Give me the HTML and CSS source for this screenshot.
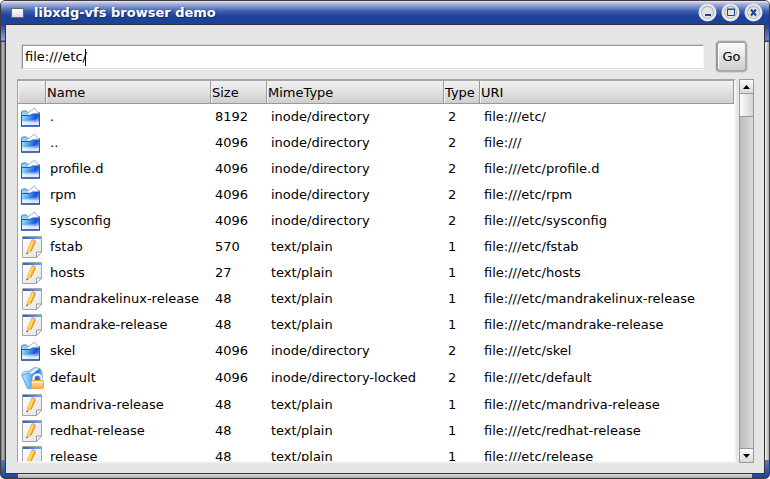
FILE: index.html
```html
<!DOCTYPE html>
<html lang="en">
<head>
<meta charset="utf-8">
<title>libxdg-vfs browser demo</title>
<link rel="stylesheet" href="styles.css">
</head>
<body>
<svg class="defs" aria-hidden="true">
  <defs>
    <linearGradient id="front" x1="0" y1="0" x2="1" y2="0.2">
      <stop offset="0" stop-color="#a4e4ff"/><stop offset=".4" stop-color="#58a8f6"/><stop offset=".8" stop-color="#1450dc"/><stop offset="1" stop-color="#2a70e4"/>
    </linearGradient>
    <linearGradient id="shine" x1="0" y1="0" x2="0" y2="1">
      <stop offset="0" stop-color="#fff" stop-opacity="0"/><stop offset=".35" stop-color="#fff" stop-opacity=".25"/><stop offset=".7" stop-color="#fff" stop-opacity=".85"/><stop offset="1" stop-color="#eef" stop-opacity=".95"/>
    </linearGradient>
    <linearGradient id="leaf" x1="0" y1="0" x2="1" y2="0">
      <stop offset="0" stop-color="#c4ecff"/><stop offset=".35" stop-color="#7cc0f8"/><stop offset=".7" stop-color="#1c60dc"/><stop offset="1" stop-color="#5aa8f0"/>
    </linearGradient>
    <linearGradient id="sheet" x1="0" y1="0" x2="1" y2="1">
      <stop offset="0" stop-color="#fff"/><stop offset="1" stop-color="#e2e2e2"/>
    </linearGradient>
    <linearGradient id="strip"><stop offset="0" stop-color="#2c5fc4"/><stop offset="1" stop-color="#6ea4f0"/></linearGradient>
    <linearGradient id="gold" x1="0" y1="0" x2="0" y2="1"><stop offset="0" stop-color="#ffe4a8"/><stop offset="1" stop-color="#ffae40"/></linearGradient>
    <linearGradient id="cap" x1="0" y1="0" x2="0" y2="1"><stop offset="0" stop-color="#c4c4c4"/><stop offset="1" stop-color="#fff"/></linearGradient>
    <symbol id="folder" viewBox="0 0 20 20">
      <path d="M.5 18V5L1.500 4h4l1 1.500h12V18z" fill="#8cd4f8" stroke="#3a84d0"/>
      <path d="M4 8 13.500 1 19 8z" fill="#f6f7ff" stroke="#a8aee0"/>
      <path d="M.5 19V8.500h9l2-1.500h7v12z" fill="url(#front)" stroke="#1c5cba"/>
      <path d="M1 18.500V14q11 0 17-4v8.500z" fill="url(#shine)"/>
      <path d="M0 19h19" stroke="#0c2f88"/>
    </symbol>
    <symbol id="text" viewBox="0 0 20 22">
      <path d="M.5.5h19v15.500l-5 5.500H.5z" fill="url(#sheet)" stroke="#a6a6a6"/>
      <path d="M1 1h18v2H1z" fill="url(#strip)"/>
      <path d="M14.500 21.500v-5.500h5z" fill="#fff" stroke="#9c9c9c"/>
      <path d="m4.500 18.500.7-5L9.500 4l4 1.500L9.500 15z" fill="#ffb52c"/>
      <path d="m5.800 14 4.400-9.500 1.800.7-4.200 9.500z" fill="#ffdc70"/>
      <path d="m8.500 15.500 4.300-9.700.9.400-4.300 9.300z" fill="#e9870d"/>
      <path d="m9.500 4.500.8-1.500 3.800 1.500-.8 1.500z" fill="#eea28a"/>
      <path d="m4.500 18.500.6-4 3.900 1z" fill="#eac89a"/><path d="m4.500 18.500.3-2 1.400.6z" fill="#333"/>
    </symbol>
    <symbol id="locked" viewBox="0 0 23 24">
      <path d="M.7 8 3.500 5l3.500.5L14.500 1l6 3 1 8-9 9-5 1.500z" fill="#b8e2fd" stroke="#7ab6ee"/>
      <path d="m7 7.500 8.500-6 2.500 2-8 6z" fill="#f0f6ff" stroke="#94bff0"/>
      <path d="M6.500 22.500.8 9.500l6-2.500 4 1.500 8-6 2.500 9L13 22z" fill="url(#leaf)" stroke="#5ca2ee"/>
      <path d="M12.500 15v-2.500a4 4 0 0 1 8 0V15" fill="none" stroke="#a4b0c0" stroke-width="3"/>
      <path d="M12.500 15v-2.500a4 4 0 0 1 8 0V15" fill="none" stroke="#f2f2f2" stroke-width="2"/>
      <rect x="10.500" y="14.500" width="12" height="8" rx="1" fill="url(#gold)" stroke="#eea040"/>
      <path d="M11 16.500h11" stroke="#ffe9bb"/>
    </symbol>
  </defs>
</svg>
<div class="window">
  <header class="titlebar">
    <span class="app-icon"></span>
    <h1 class="title">libxdg-vfs browser demo</h1>
    <button class="caption" type="button" aria-label="Minimize"><svg viewBox="0 0 19 19"><circle class="rim" cx="9.500" cy="9.500" r="8"/><circle class="dish" cx="9.500" cy="9.500" r="6"/><path d="M7 12h6" class="mark"/></svg></button>
    <button class="caption" type="button" aria-label="Maximize"><svg viewBox="0 0 19 19"><circle class="rim" cx="9.500" cy="9.500" r="8"/><circle class="dish" cx="9.500" cy="9.500" r="6"/><path d="M6.500 6.500h7v6h-7zM6 6h8" class="box"/></svg></button>
    <button class="caption" type="button" aria-label="Close"><svg viewBox="0 0 19 19"><circle class="rim" cx="9.500" cy="9.500" r="8"/><circle class="dish" cx="9.500" cy="9.500" r="6"/><path d="m7 6.500 5 6m0-6-5 6" class="mark"/></svg></button>
  </header>
  <div class="frame">
    <main class="client">
      <form class="location">
        <span class="field"><input class="address" type="text" value="file:///etc/" aria-label="Location"><span class="caret"></span></span>
        <button class="go" type="button">Go</button>
      </form>
      <div class="browser">
        <div class="list">
          <table class="files">
            <colgroup><col class="c-icon"><col class="c-name"><col class="c-size"><col class="c-mime"><col class="c-type"><col></colgroup>
            <thead><tr><th></th><th>Name</th><th>Size</th><th>MimeType</th><th>Type</th><th>URI</th></tr></thead>
            <tbody>
              <tr><td><svg class="folder"><use href="#folder"/></svg></td><td>.</td><td>8192</td><td>inode/directory</td><td>2</td><td>file:///etc/</td></tr>
              <tr><td><svg class="folder"><use href="#folder"/></svg></td><td>..</td><td>4096</td><td>inode/directory</td><td>2</td><td>file:///</td></tr>
              <tr><td><svg class="folder"><use href="#folder"/></svg></td><td>profile.d</td><td>4096</td><td>inode/directory</td><td>2</td><td>file:///etc/profile.d</td></tr>
              <tr><td><svg class="folder"><use href="#folder"/></svg></td><td>rpm</td><td>4096</td><td>inode/directory</td><td>2</td><td>file:///etc/rpm</td></tr>
              <tr><td><svg class="folder"><use href="#folder"/></svg></td><td>sysconfig</td><td>4096</td><td>inode/directory</td><td>2</td><td>file:///etc/sysconfig</td></tr>
              <tr><td><svg class="text"><use href="#text"/></svg></td><td>fstab</td><td>570</td><td>text/plain</td><td>1</td><td>file:///etc/fstab</td></tr>
              <tr><td><svg class="text"><use href="#text"/></svg></td><td>hosts</td><td>27</td><td>text/plain</td><td>1</td><td>file:///etc/hosts</td></tr>
              <tr><td><svg class="text"><use href="#text"/></svg></td><td>mandrakelinux-release</td><td>48</td><td>text/plain</td><td>1</td><td>file:///etc/mandrakelinux-release</td></tr>
              <tr><td><svg class="text"><use href="#text"/></svg></td><td>mandrake-release</td><td>48</td><td>text/plain</td><td>1</td><td>file:///etc/mandrake-release</td></tr>
              <tr><td><svg class="folder"><use href="#folder"/></svg></td><td>skel</td><td>4096</td><td>inode/directory</td><td>2</td><td>file:///etc/skel</td></tr>
              <tr class="tall"><td><svg class="locked"><use href="#locked"/></svg></td><td>default</td><td>4096</td><td>inode/directory-locked</td><td>2</td><td>file:///etc/default</td></tr>
              <tr><td><svg class="text"><use href="#text"/></svg></td><td>mandriva-release</td><td>48</td><td>text/plain</td><td>1</td><td>file:///etc/mandriva-release</td></tr>
              <tr><td><svg class="text"><use href="#text"/></svg></td><td>redhat-release</td><td>48</td><td>text/plain</td><td>1</td><td>file:///etc/redhat-release</td></tr>
              <tr><td><svg class="text"><use href="#text"/></svg></td><td>release</td><td>48</td><td>text/plain</td><td>1</td><td>file:///etc/release</td></tr>
            </tbody>
          </table>
        </div>
        <div class="scrollbar">
          <button class="step" type="button" aria-label="Scroll up"><svg viewBox="0 0 7 4"><path d="M0 4h7L3.500 0z"/></svg></button>
          <div class="thumb"></div>
          <button class="step last" type="button" aria-label="Scroll down"><svg viewBox="0 0 7 4"><path d="M0 0h7L3.500 4z"/></svg></button>
        </div>
      </div>
    </main>
  </div>
</div>
</body>
</html>
```
FILE: styles.css
```css
* { box-sizing: border-box; }
body {
  margin: 0;
  background: #fff;
  color: #000;
  font: 13px/16px "DejaVu Sans", sans-serif;
}
button, input { font: inherit; color: inherit; margin: 0; padding: 0; }
svg { display: block; }
.defs { position: absolute; width: 0; height: 0; }

.window {
  display: flex;
  flex-direction: column;
  height: 100vh;
  border: 1px solid #3c3c3c;
  border-radius: 5px;
  overflow: hidden;
  background:
    linear-gradient(#5878bd, #1f429c) 0 100% / 17px 18px no-repeat,
    linear-gradient(#5878bd, #1f429c) 100% 100% / 17px 18px no-repeat,
    linear-gradient(#1f429c, #8da7e0 16px, #1f429c 17px) 0 23px / 5px 18px no-repeat,
    linear-gradient(#1f429c, #6584cb 16px, #1f429c 17px) 100% 23px / 5px 18px no-repeat,
    linear-gradient(#e8e8e8, #a8aaa8) 0 100% / 100% 5px no-repeat,
    linear-gradient(90deg, #777, #bbb 2px, #777 4px) 0 0 / 4px 100% no-repeat,
    linear-gradient(90deg, #f4f4f4, #aaa) 100% 0 / 4px 100% no-repeat;
}
.titlebar {
  display: flex;
  align-items: center;
  flex: none;
  gap: 4px;
  height: 23px;
  padding: 0 6px 0 10px;
  background: linear-gradient(#f0e8f8 0, #b7bfe0 2px, #7890cc 6px, #3f60b2 10px, #1d429c 15px, #1d429c);
}
.app-icon {
  width: 13px;
  height: 10px;
  border: 1px solid #68686c;
  background: linear-gradient(#fff, #ddd);
}
.title {
  flex: 1;
  margin: 0 6px;
  color: #fff;
  font-size: 13px;
  font-weight: bold;
  text-shadow: 1px 1px 1px #122a66;
}
.caption { width: 19px; height: 19px; border: 0; background: none; }
.rim { fill: url(#cap); stroke: #e8e8e8; stroke-width: 2; }
.dish { fill: #e2e4e2; stroke: #b0b2b2; stroke-width: 1; }
.mark { fill: none; stroke: #1f429c; stroke-width: 2; }
.box { fill: none; stroke: #1f429c; }

.frame { flex: 1; min-height: 0; padding: 0 4px 4px; }
.client {
  display: flex;
  flex-direction: column;
  gap: 7px;
  height: 100%;
  padding: 16px 10px 10px 11px;
  border: 1px solid #333;
  background: #e6e6e6;
}
.location {
  display: flex;
  align-items: center;
  gap: 12px;
  padding: 0 7px 0 4px;
}
.field {
  display: flex;
  flex: 1;
  align-items: center;
  position: relative;
  height: 26px;
  border: 1px solid #cfcfcf;
  border-right-color: #f6f6f6;
  border-bottom-color: #f6f6f6;
}
.address {
  width: 100%;
  height: 24px;
  padding: 0 2px;
  border: 0;
  border-top: 1px solid #999;
  border-left: 1px solid #999;
  border-bottom: 1px solid #ddd;
  background: #fff;
  outline: 0;
}
.caret { position: absolute; left: 63px; top: 4px; width: 1px; height: 17px; background: #000; }
.go {
  width: 31px;
  height: 31px;
  border: 2px solid #999;
  border-color: #a4a4a4 #aaa #aaa #999;
  border-radius: 4px;
  background: linear-gradient(#fafafa, #ccd0cc);
  box-shadow: inset 1px 1px #fff, 0 0 0 1px #d2d2d2;
}

.browser { display: flex; flex: 1; gap: 3px; min-height: 0; }
.list {
  flex: 1;
  min-width: 0;
  overflow: hidden;
  border: 1px solid #a0a0a0;
  border-top: 2px solid #a6a6a6;
  border-right: 2px solid #f4f4f4;
  border-bottom: 2px solid #f4f4f4;
  background: #fff;
}
.files { width: 100%; table-layout: fixed; border-collapse: separate; border-spacing: 0; }
.c-icon { width: 28px; }
.c-name { width: 165px; }
.c-size { width: 56px; }
.c-mime { width: 177px; }
.c-type { width: 36px; }
th {
  height: 23px;
  padding: 2px 0 0 1px;
  border-right: 1px solid #999;
  border-bottom: 1px solid #999;
  background: linear-gradient(#f2f2f2, #cfcfcf);
  box-shadow: inset 1px 0 #f4f4f4;
  font-weight: normal;
  text-align: left;
  white-space: nowrap;
}
td { height: 26px; padding: 0 4px; white-space: nowrap; }
td:first-child { padding: 0 0 0 3px; }
.tall td { height: 28px; }
.folder { width: 20px; height: 20px; }
.text { width: 20px; height: 22px; margin-left: 1px; }
.locked { width: 23px; height: 24px; }

.scrollbar {
  display: flex;
  flex-direction: column;
  width: 15px;
  border: 1px solid #999;
  background: linear-gradient(90deg, #bcbcbc, #dcdcdc);
}
.step {
  display: grid;
  place-items: center;
  height: 14px;
  border: 0;
  border-bottom: 1px solid #999;
  background: linear-gradient(#fcfcfc, #d8d8d8);
}
.step svg { width: 7px; height: 4px; }
.last { margin-top: auto; border-bottom: 0; border-top: 1px solid #999; }
.thumb {
  height: 23px;
  border-bottom: 1px solid #999;
  background: linear-gradient(90deg, #fcfcfc, #d4d4d4);
}
```
